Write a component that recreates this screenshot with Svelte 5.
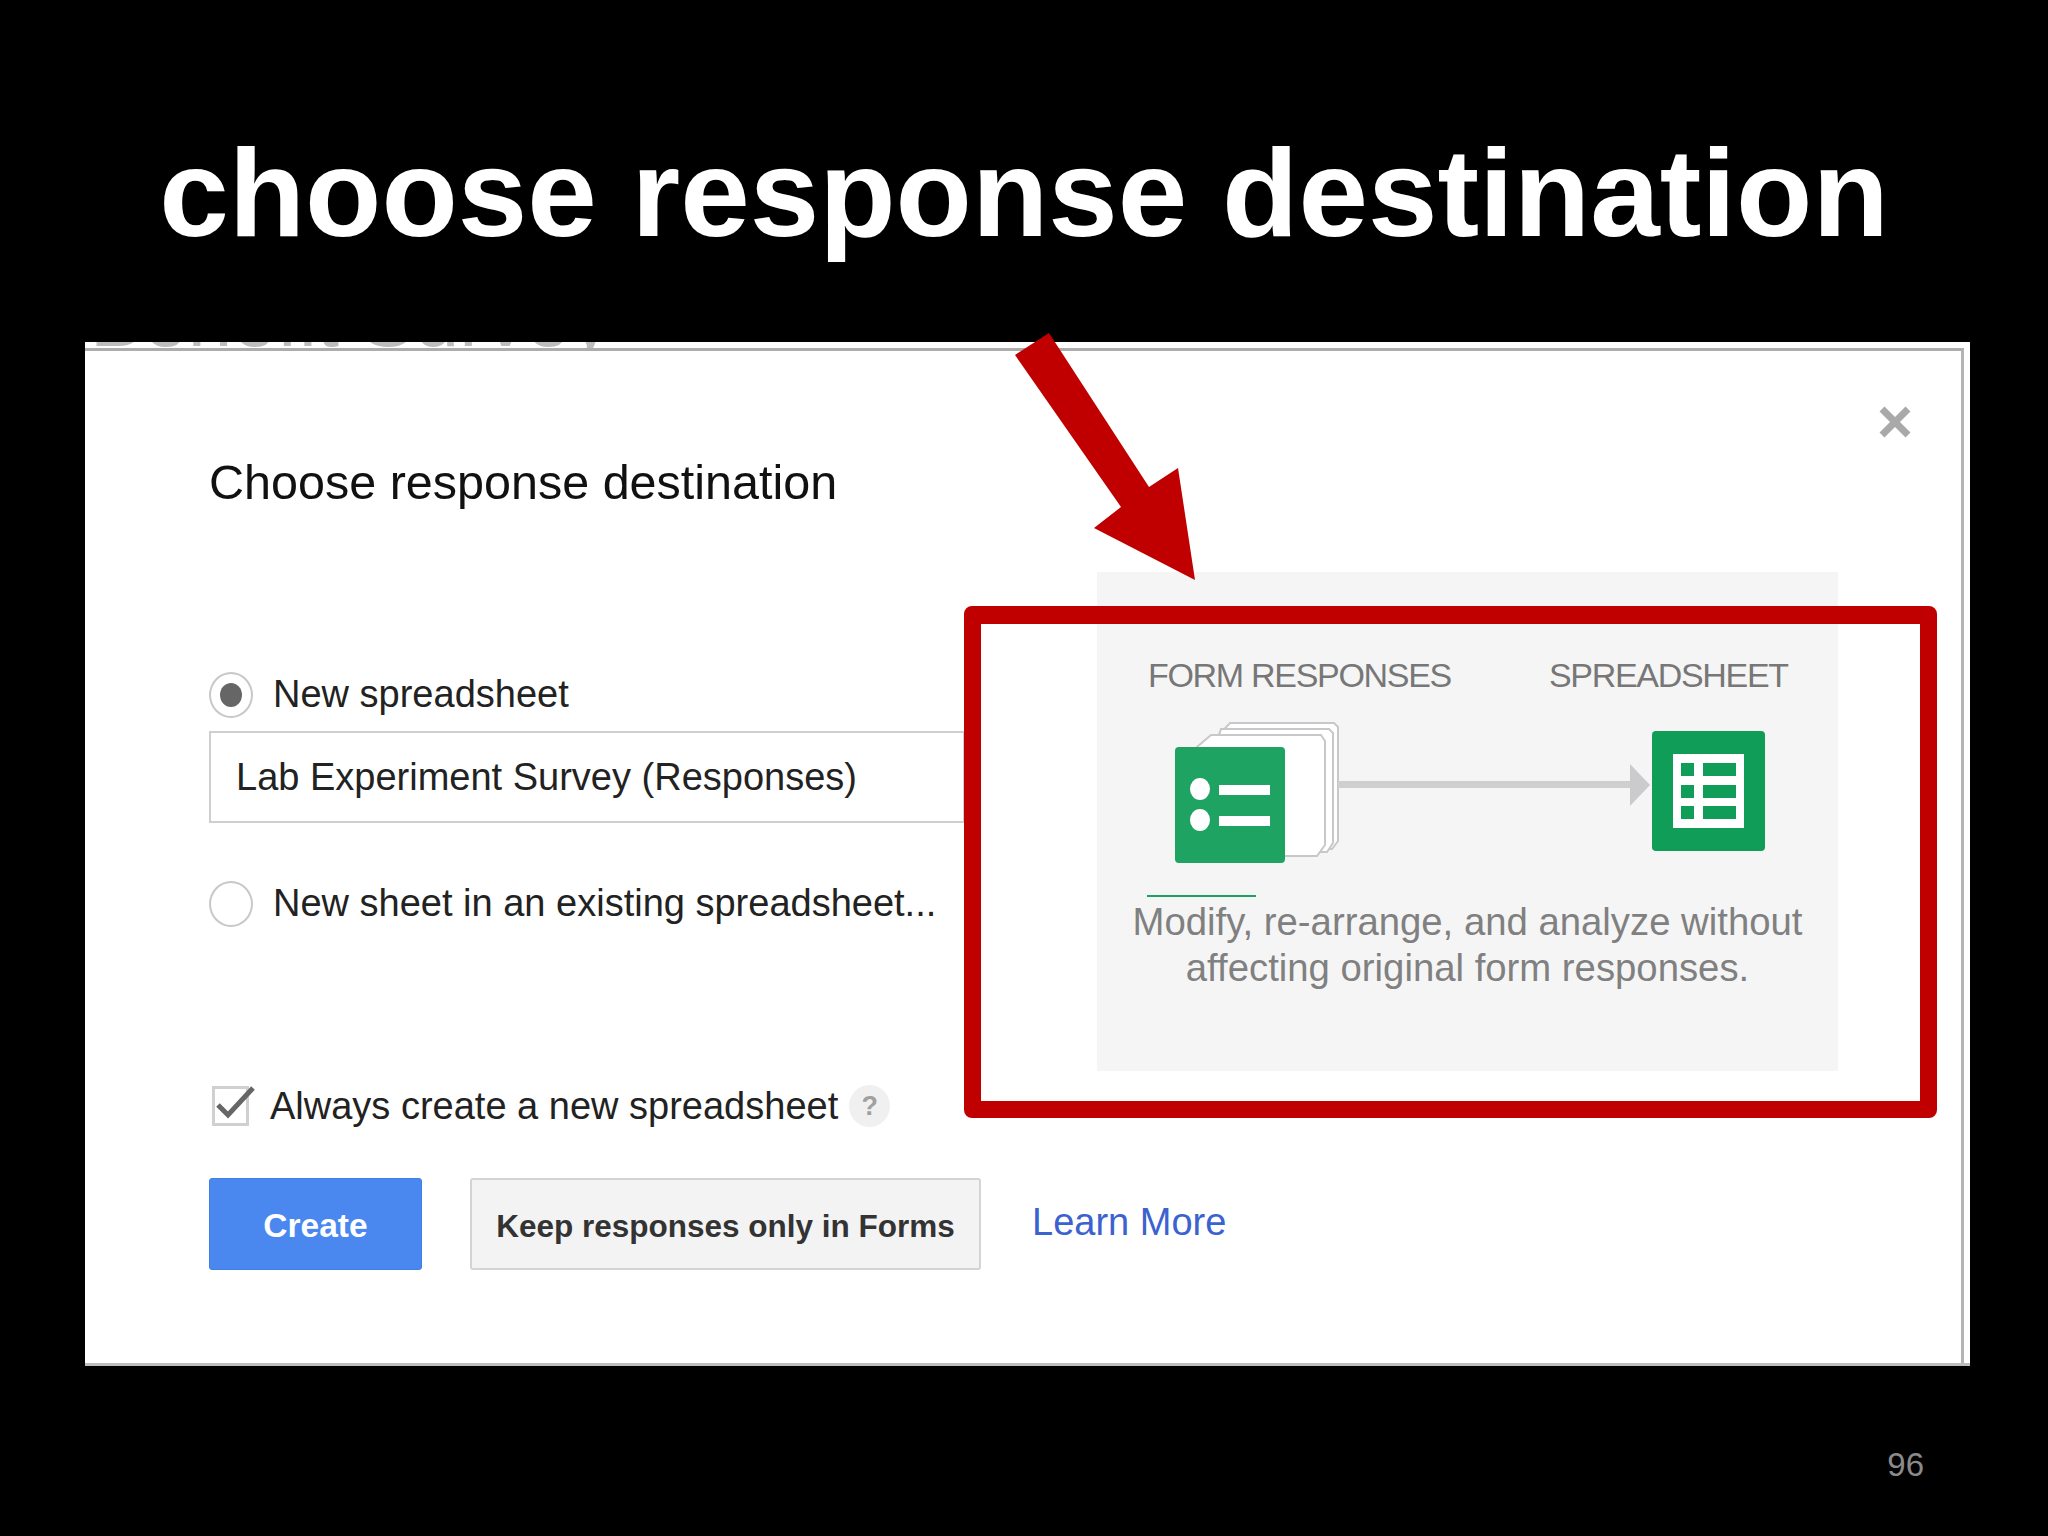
<script>
    const labels = ["FORM RESPONSES", "SPREADSHEET"]
    const sheetRows = [42, 64, 85]
</script>

<main class="slide">
    <h1>choose response destination</h1>

    <section class="dialog">
        <div class="ghost-band"><span>Benefit Survey</span></div>
        <div class="frame"></div>
        <svg class="close" viewBox="0 0 36 36" aria-label="Close">
            <path d="M5 5 L31 31 M31 5 L5 31" stroke="#a9a9a9" stroke-width="7" fill="none" />
        </svg>

        <h2>Choose response destination</h2>

        <div class="body">
            <div class="options">
                <div class="radio-row">
                    <span class="radio checked"></span>
                    <span>New spreadsheet</span>
                </div>
                <div class="input">Lab Experiment Survey (Responses)</div>
                <div class="radio-row second">
                    <span class="radio"></span>
                    <span>New sheet in an existing spreadsheet...</span>
                </div>
            </div>

            <div class="panel">
                <div class="labels">
                    {#each labels as label}
                        <span>{label}</span>
                    {/each}
                </div>
                <svg class="flow" width="741" height="178" viewBox="0 0 741 178">
                    <!-- paper stack -->
                    <path d="M133 2 H237 L241 6 V120 L235 128 H120 V16 Z" fill="#fff" stroke="#c8c8ca" stroke-width="2" />
                    <path d="M124 8 H232 L236 12 V122 L230 131 H120 V20 Z" fill="#fff" stroke="#c8c8ca" stroke-width="2" />
                    <path d="M114 14 H224 L228 20 V124 L220 135 H100 V26 Z" fill="#fff" stroke="#c8c8ca" stroke-width="2" />
                    <!-- form icon -->
                    <rect x="78" y="26" width="110" height="116" rx="4" fill="#1ea362" />
                    <ellipse cx="103" cy="68" rx="10" ry="11" fill="#fff" />
                    <ellipse cx="103" cy="99" rx="10" ry="11" fill="#fff" />
                    <rect x="122" y="64" width="51" height="10" fill="#fff" />
                    <rect x="122" y="95" width="51" height="10" fill="#fff" />
                    <!-- connector -->
                    <rect x="241" y="60" width="292" height="7" fill="#cfcfd1" />
                    <path d="M533 43 L553 64 L533 85 Z" fill="#cbcbcd" />
                    <!-- sheets icon -->
                    <rect x="555" y="10" width="113" height="120" rx="4" fill="#0f9d58" />
                    <rect x="576" y="33" width="71" height="74" fill="#fff" />
                    {#each sheetRows as y}
                        <rect x="584" {y} width="13" height="13" fill="#0f9d58" />
                        <rect x="606" {y} width="33" height="13" fill="#0f9d58" />
                    {/each}
                    <rect x="50" y="174" width="109" height="2" fill="#1ea362" />
                </svg>
                <p>Modify, re-arrange, and analyze without<br />affecting original form responses.</p>
            </div>
        </div>

        <div class="always">
            <span class="checkbox">
                <svg viewBox="0 0 44 44" width="44" height="44">
                    <path d="M6 19 L16 29 L41 2" stroke="#666" stroke-width="5" fill="none" />
                </svg>
            </span>
            <span>Always create a new spreadsheet</span>
            <span class="help">?</span>
        </div>

        <div class="actions">
            <button class="create">Create</button>
            <button class="keep">Keep responses only in Forms</button>
            <span class="learn">Learn More</span>
        </div>
    </section>

    <div class="highlight"></div>
    <svg class="arrow" width="200" height="260" viewBox="1000 330 200 260">
        <polygon points="1015,355 1049,333 1149,487 1178,468 1195,580 1094,528 1121,507" fill="#c00000" />
    </svg>

    <div class="page">96</div>
</main>

<style>
    :global(body) {
        margin: 0;
        background: #000;
    }

    .slide {
        position: relative;
        width: 2048px;
        height: 1536px;
        background: #000;
        overflow: hidden;
        font-family: "Liberation Sans", Arial, sans-serif;
    }

    h1 {
        margin: 0;
        height: 342px;
        box-sizing: border-box;
        padding-top: 120px;
        text-align: center;
        color: #fff;
        font-size: 125px;
        line-height: 146px;
        font-weight: 700;
    }

    .dialog {
        position: relative;
        width: 1885px;
        height: 1024px;
        margin-left: 85px;
        box-sizing: border-box;
        padding: 110px 0 0 124px;
        background: #fff;
        border-bottom: 3px solid #bdbdbd;
    }

    .ghost-band {
        position: absolute;
        left: 0;
        top: 0;
        right: 0;
        height: 6px;
        overflow: hidden;
    }

    .ghost-band span {
        position: absolute;
        left: 5px;
        top: -63px;
        color: #bdbdbd;
        font-size: 80px;
        line-height: 80px;
        white-space: nowrap;
    }

    .frame {
        position: absolute;
        left: 0;
        top: 6px;
        right: 6px;
        bottom: 0;
        border-top: 3px solid #adadad;
        border-right: 3px solid #b4b4b4;
        pointer-events: none;
    }

    .close {
        position: absolute;
        right: 57px;
        top: 62px;
        width: 36px;
        height: 36px;
    }

    h2 {
        margin: 0;
        height: 60px;
        color: #111;
        font-size: 48.5px;
        line-height: 60px;
        font-weight: 400;
    }

    .body {
        display: flex;
        margin-top: 60px;
        height: 499px;
    }

    .options {
        width: 888px;
        padding-top: 100px;
        box-sizing: border-box;
        color: #222;
        font-size: 38px;
    }

    .radio-row {
        display: flex;
        align-items: center;
        gap: 20px;
        height: 46px;
    }

    .radio-row.second {
        margin-top: 58px;
    }

    .radio-row span:last-child {
        margin-top: -2px;
    }

    .radio {
        display: flex;
        align-items: center;
        justify-content: center;
        width: 44px;
        height: 46px;
        box-sizing: border-box;
        border: 2px solid #c8c8c8;
        border-radius: 50%;
    }

    .radio.checked::after {
        content: "";
        width: 22px;
        height: 24px;
        border-radius: 50%;
        background: #666;
    }

    .input {
        width: 756px;
        height: 92px;
        margin-top: 13px;
        box-sizing: border-box;
        padding-left: 25px;
        border: 2px solid #cfcfcf;
        line-height: 88px;
    }

    .panel {
        width: 741px;
        box-sizing: border-box;
        padding-top: 85px;
        background: #f5f5f6;
    }

    .labels {
        display: flex;
        gap: 98px;
        padding-left: 51px;
        color: #777;
        font-size: 34px;
        letter-spacing: -1.3px;
        line-height: 36px;
    }

    .flow {
        display: block;
        margin-top: 28px;
    }

    .panel p {
        margin: 0;
        text-align: center;
        color: #808080;
        font-size: 38.3px;
        line-height: 46px;
    }

    .always {
        display: flex;
        align-items: center;
        height: 40px;
        margin-top: 15px;
        margin-left: 3px;
        color: #222;
        font-size: 38px;
    }

    .checkbox {
        position: relative;
        width: 37px;
        height: 40px;
        margin-right: 21px;
        box-sizing: border-box;
        border: 3px solid #d0d0d0;
    }

    .checkbox svg {
        position: absolute;
        left: -3px;
        top: -3px;
        overflow: visible;
    }

    .help {
        width: 41px;
        height: 42px;
        margin-left: 11px;
        border-radius: 50%;
        background: #f0f0f0;
        color: #a0a0a0;
        font-size: 27px;
        font-weight: 700;
        line-height: 42px;
        text-align: center;
    }

    .actions {
        display: flex;
        margin-top: 52px;
    }

    button {
        height: 92px;
        padding: 4px 0 0;
        box-sizing: border-box;
        border-radius: 3px;
        font-family: inherit;
        font-weight: 700;
    }

    .create {
        width: 213px;
        border: 1px solid #3f7fe8;
        background: #4a88f0;
        color: #fff;
        font-size: 33.5px;
    }

    .keep {
        width: 511px;
        margin-left: 48px;
        border: 2px solid #d4d4d4;
        background: #f3f3f3;
        color: #333;
        font-size: 31.5px;
    }

    .learn {
        margin: 21px 0 0 51px;
        color: #3b62cf;
        font-size: 38px;
        line-height: 46px;
    }

    .highlight {
        position: absolute;
        left: 964px;
        top: 606px;
        width: 973px;
        height: 512px;
        box-sizing: border-box;
        border: 17px solid #c00000;
        border-top-width: 18px;
        border-radius: 8px;
    }

    .arrow {
        position: absolute;
        left: 1000px;
        top: 330px;
    }

    .page {
        position: absolute;
        right: 124px;
        top: 1447px;
        color: #8a8a8a;
        font-size: 33px;
        line-height: 36px;
    }
</style>
